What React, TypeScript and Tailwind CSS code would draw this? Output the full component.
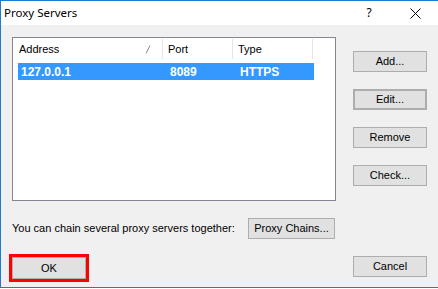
import React from "react";

const btn =
  "flex items-center justify-center bg-[#e1e1e1] border border-[#adadad] text-[11px] text-black leading-none";

export default function App() {
  return (
    <div className="w-[438px] h-[289px] bg-white overflow-hidden" style={{ fontFamily: "'Liberation Sans', Arial, sans-serif" }}>
      <div className="w-[438px] h-[288px] border-l border-t border-b border-[#1a7bd0] flex flex-col bg-[#f0f0f0]">
        {/* Title bar */}
        <div className="h-[24px] bg-white flex items-center shrink-0">
          <div className="pl-[3px] text-[11.5px] text-black" style={{ fontFamily: "'Noto Sans', 'Open Sans', sans-serif" }}>
            Proxy Servers
          </div>
          <div className="ml-auto flex items-center">
            <div className="w-[46px] text-center text-[12px] text-black" style={{ fontFamily: "'Noto Sans', sans-serif" }}>?</div>
            <div className="w-[46px] flex justify-center">
              <svg width="11" height="11" viewBox="0 0 11 11">
                <path d="M0.5 0.5 L10.5 10.5 M10.5 0.5 L0.5 10.5" stroke="#000" strokeWidth="1" />
              </svg>
            </div>
          </div>
        </div>
        {/* Main row */}
        <div className="flex pl-[11px] pt-[12px]">
          <div className="w-[324px] h-[164px] border border-[#828790] bg-white pl-[5px] pt-[1px]">
            <div className="flex h-[20px] items-center text-[11px] text-black">
              <div className="w-[145px] h-full border-r border-[#e5e5e5] flex items-center pl-[1px] relative">
                Address
                <svg className="absolute left-[127px] top-[6px]" width="6" height="9" viewBox="0 0 6 9">
                  <path d="M5 0.5 L1 8.5" stroke="#888" strokeWidth="1" />
                </svg>
              </div>
              <div className="w-[70px] h-full border-r border-[#e5e5e5] flex items-center pl-[5px]">Port</div>
              <div className="w-[80px] h-full border-r border-[#e5e5e5] flex items-center pl-[5px]">Type</div>
            </div>
            <div className="mt-[4px] flex h-[17px] w-[296px] bg-[#3399ff] items-center text-[12px] font-bold text-white">
              <div className="w-[145px] pl-[3px]">127.0.0.1</div>
              <div className="w-[70px] pl-[7px]">8089</div>
              <div className="w-[80px] pl-[7px]">HTTPS</div>
            </div>
          </div>
          <div className="ml-[17px] pt-[14px] flex flex-col gap-[17px]">
            <div className={`${btn} w-[74px] h-[21px]`}>Add...</div>
            <div className={`${btn} w-[74px] h-[21px] border-2 border-[#0078d7]`}>Edit...</div>
            <div className={`${btn} w-[74px] h-[21px]`}>Remove</div>
            <div className={`${btn} w-[74px] h-[21px]`}>Check...</div>
          </div>
        </div>
        {/* Chain row */}
        <div className="flex items-center pl-[11px] mt-[17px] h-[21px]">
          <div className="w-[236px] text-[11px] text-black">You can chain several proxy servers together:</div>
          <div className={`${btn} w-[87px] h-[21px]`}>Proxy Chains...</div>
        </div>
        {/* Bottom row */}
        <div className="flex items-start pl-[8px] mt-[15px]">
          <div className="border-[3px] border-[#ff0000] p-[0px]">
            <div className={`${btn} w-[74px] h-[22px]`}>OK</div>
          </div>
          <div className={`${btn} w-[74px] h-[21px] ml-[264px] mt-[2px]`}>Cancel</div>
        </div>
      </div>
    </div>
  );
}
